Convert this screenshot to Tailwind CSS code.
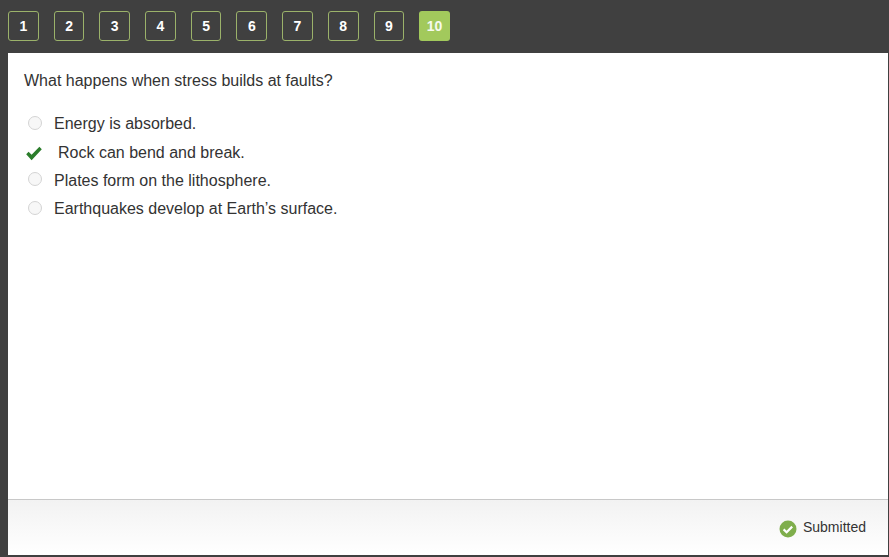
<!DOCTYPE html>
<html lang="en">
<head>
    <meta charset="UTF-8">
    <title>Quiz</title>
    <script src="https://cdn.jsdelivr.net/npm/@tailwindcss/browser@4"></script>
</head>
<body class="bg-[#404040] font-['Liberation_Sans',Arial,sans-serif] overflow-hidden">
    <div class="w-[889px] h-[557px] flex flex-col">
        <!-- question numbers -->
        <div class="h-[53px] pl-2 pt-[11px] flex gap-[15px] shrink-0">
            <div class="w-[30.7px] h-[30px] flex items-center justify-center rounded-[3px] border border-[#9bb26a] text-white text-sm font-bold">1</div>
            <div class="w-[30.7px] h-[30px] flex items-center justify-center rounded-[3px] border border-[#9bb26a] text-white text-sm font-bold">2</div>
            <div class="w-[30.7px] h-[30px] flex items-center justify-center rounded-[3px] border border-[#9bb26a] text-white text-sm font-bold">3</div>
            <div class="w-[30.7px] h-[30px] flex items-center justify-center rounded-[3px] border border-[#9bb26a] text-white text-sm font-bold">4</div>
            <div class="w-[30.7px] h-[30px] flex items-center justify-center rounded-[3px] border border-[#9bb26a] text-white text-sm font-bold">5</div>
            <div class="w-[30.7px] h-[30px] flex items-center justify-center rounded-[3px] border border-[#9bb26a] text-white text-sm font-bold">6</div>
            <div class="w-[30.7px] h-[30px] flex items-center justify-center rounded-[3px] border border-[#9bb26a] text-white text-sm font-bold">7</div>
            <div class="w-[30.7px] h-[30px] flex items-center justify-center rounded-[3px] border border-[#9bb26a] text-white text-sm font-bold">8</div>
            <div class="w-[30.7px] h-[30px] flex items-center justify-center rounded-[3px] border border-[#9bb26a] text-white text-sm font-bold">9</div>
            <div class="w-[30.7px] h-[30px] flex items-center justify-center rounded-[3px] bg-[#a2c95c] text-white/90 text-sm font-bold">10</div>
        </div>

        <!-- question panel -->
        <div class="flex-1 ml-2 mr-px mb-[2px] bg-white flex flex-col min-h-0">
            <div class="flex-1 pt-[18px] pl-4 text-[#333333] text-base">
                <p class="leading-[20px]">What happens when stress builds at faults?</p>
                <ul class="mt-[19px]">
                    <li class="h-[28.4px] flex items-center">
                        <span class="w-[14px] h-[14px] ml-[4px] mb-[3px] rounded-full border border-[#d4d4d4] bg-[#f7f7f7]"></span>
                        <span class="ml-[12px]">Energy is absorbed.</span>
                    </li>
                    <li class="h-[28.4px] flex items-center">
                        <svg class="w-[18px] h-[15px] ml-[1px] mt-[1px]" viewBox="0 0 18 15"><path d="M1.2 8.3 L3.6 5.8 L6.6 8.8 L14.4 0.8 L16.8 3.3 L6.6 14.2 Z" fill="#2b7d2b"/></svg>
                        <span class="ml-[15px]">Rock can bend and break.</span>
                    </li>
                    <li class="h-[28.4px] flex items-center">
                        <span class="w-[14px] h-[14px] ml-[4px] mb-[3px] rounded-full border border-[#d4d4d4] bg-[#f7f7f7]"></span>
                        <span class="ml-[12px]">Plates form on the lithosphere.</span>
                    </li>
                    <li class="h-[28.4px] flex items-center">
                        <span class="w-[14px] h-[14px] ml-[4px] mb-[3px] rounded-full border border-[#d4d4d4] bg-[#f7f7f7]"></span>
                        <span class="ml-[12px]">Earthquakes develop at Earth’s surface.</span>
                    </li>
                </ul>
            </div>

            <!-- footer -->
            <div class="h-[56px] shrink-0 border-t border-[#c8c8c8] bg-gradient-to-b from-[#f2f2f2] to-white flex items-start justify-end pr-[22px] pt-[19px]">
                <svg class="w-[18px] h-[18px] mt-[1px]" viewBox="0 0 18 18"><circle cx="9" cy="9" r="8.5" fill="#7fae4c"/><path d="M4.6 9.4 L7.6 12.2 L13.2 6.6" fill="none" stroke="#ffffff" stroke-width="2.2"/></svg>
                <span class="ml-[6px] text-sm leading-[16px] text-[#333333]">Submitted</span>
            </div>
        </div>
    </div>
</body>
</html>
